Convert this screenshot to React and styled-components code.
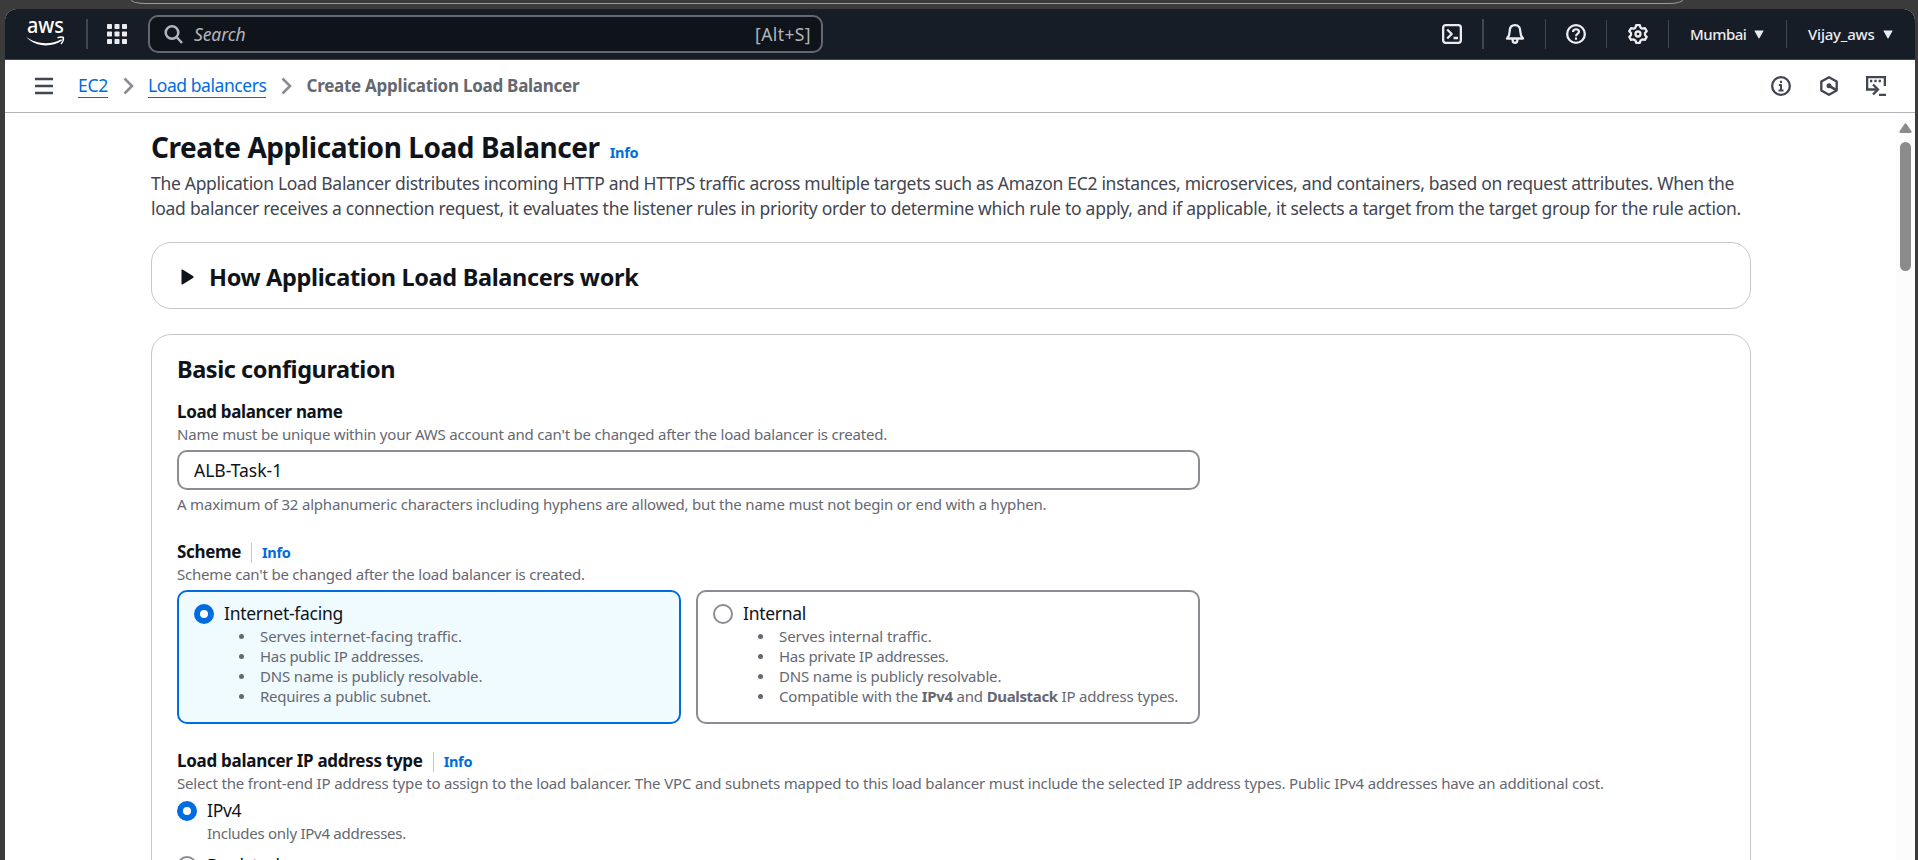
import React from "react";
import styled, { createGlobalStyle, css } from "styled-components";

const GlobalStyle = createGlobalStyle`
  * { box-sizing: border-box; }
  html, body { margin: 0; padding: 0; height: 100%; overflow: hidden; }
  body {
    font-family: "Noto Sans", "Open Sans", sans-serif;
    font-size: 17.5px;
    line-height: 25px;
    color: #0f141a;
    background: #3b3b3b;
  }
`;

const BrowserFrame = styled.div`
  width: 1918px;
  height: 860px;
  display: flex;
  flex-direction: column;
  padding: 0 3px 0 5px;
  overflow: hidden;
  background: #3b3b3b;
`;

const AddressBarEdge = styled.div`
  flex: none;
  height: 4px;
  width: 1552px;
  margin: 0 0 5px 126px;
  border: 1px solid #9c9c9c;
  border-top: 0;
  border-radius: 0 0 14px 14px / 0 0 4px 4px;
  background: #3b3b3b;
`;

const Window = styled.div`
  flex: 1;
  min-height: 0;
  display: flex;
  flex-direction: column;
  border-radius: 12px 12px 0 0;
  overflow: hidden;
  background: #fff;
`;

const Header = styled.header`
  flex: none;
  height: 51px;
  display: flex;
  align-items: center;
  background: #161d26;
  border-bottom: 1px solid #424650;
`;

const LogoCell = styled.div`
  width: 81px;
  height: 50px;
  display: flex;
  align-items: center;
  padding-left: 20px;
`;

const Divider = styled.span`
  flex: none;
  width: ${(p) => (p.$thick ? 2 : 1)}px;
  height: ${(p) => (p.$short ? 28 : 30)}px;
  background: #424650;
`;

const HeaderCell = styled.div`
  width: ${(p) => p.$width}px;
  height: 50px;
  display: flex;
  align-items: center;
  justify-content: center;
  color: #ebebf0;
`;

const AppsCell = styled(HeaderCell)`
  padding-right: 2px;
`;

const HeaderMenu = styled(HeaderCell)`
  justify-content: flex-start;
  gap: 8px;
  padding: 1px 0 0 21px;
  font-size: 15px;
  font-weight: 500;
  letter-spacing: ${(p) => p.$track}px;
`;

const SearchBox = styled.div`
  width: 675px;
  height: 38px;
  display: flex;
  align-items: center;
  padding: 0 10px 0 14px;
  border: 2px solid #656871;
  border-radius: 10px;
  background: #0f141a;
  color: #b4b4bb;
`;

const SearchHint = styled.span`
  flex: 1;
  padding-left: 10px;
  font-style: italic;
  letter-spacing: -0.1px;
`;

const Shortcut = styled.span`
  letter-spacing: 0.4px;
`;

const Spacer = styled.div`
  flex: 1;
`;

const CrumbBar = styled.nav`
  flex: none;
  height: 53px;
  display: flex;
  align-items: center;
  padding: 0 29px 0 30px;
  border-bottom: 1px solid #b4b4bb;
  color: #424650;
`;

const Crumbs = styled.div`
  flex: 1;
  display: flex;
  align-items: center;
  padding-left: 25px;
`;

const CrumbLink = styled.a`
  line-height: 21px;
  padding-bottom: 1px;
  color: #006ce0;
  border-bottom: 1px solid #006ce0;
  letter-spacing: ${(p) => p.$track}px;
`;

const CrumbCurrent = styled.span`
  padding-bottom: 1px;
  font-size: 17px;
  font-weight: 700;
  color: #656871;
  letter-spacing: -0.26px;
`;

const CrumbChevron = styled.svg`
  margin: 0 14.5px;
`;

const Tools = styled.div`
  display: flex;
  align-items: center;
  gap: 28px 27.5px;
`;

const Body = styled.div`
  flex: 1;
  min-height: 0;
  display: flex;
`;

const Main = styled.main`
  flex: 1;
  padding: 15px 145px 0 146px;
  overflow: hidden;
`;

const Scrollbar = styled.div`
  width: 19px;
  display: flex;
  flex-direction: column;
  align-items: center;
  padding: 10px 1px 0 0;
  gap: 9px;
  background: #fcfcfc;
`;

const Thumb = styled.div`
  width: 11px;
  height: 129px;
  border-radius: 6px;
  background: #8b8b8b;
`;

const TitleRow = styled.div`
  display: flex;
  align-items: baseline;
  gap: 10px;
`;

const Title = styled.h1`
  margin: 0;
  font-size: 28px;
  line-height: 38px;
  font-weight: 700;
  letter-spacing: -0.45px;
`;

const InfoLink = styled.a`
  font-size: 14.5px;
  line-height: 20px;
  font-weight: 700;
  letter-spacing: -0.3px;
  color: #006ce0;
`;

const Intro = styled.p`
  margin: 5px 0 21px;
  color: #424650;
  white-space: nowrap;
`;

const IntroLine = styled.span`
  display: block;
  letter-spacing: ${(p) => p.$track}px;
`;

const Panel = styled.section`
  border: 1px solid #c6c6cd;
  border-radius: 20px;
  background: #fff;
`;

const ExpandablePanel = styled(Panel)`
  height: 67px;
  margin-bottom: 25px;
  display: flex;
  align-items: center;
  gap: 15px;
  padding: 3px 29px 0;
`;

const ConfigPanel = styled(Panel)`
  height: 640px;
  padding: 19px 25px;
`;

const SectionTitle = styled.h2`
  margin: 0;
  font-size: 23.5px;
  line-height: 30px;
  font-weight: 700;
  letter-spacing: ${(p) => p.$track}px;
`;

const Field = styled.div`
  margin-top: ${(p) => p.$top}px;
`;

const LabelRow = styled.div`
  display: flex;
  align-items: center;
`;

const Label = styled.label`
  font-size: 17px;
  font-weight: 700;
  letter-spacing: ${(p) => p.$track}px;
`;

const LabelDivider = styled.span`
  width: 1px;
  height: 20px;
  margin: 3px 10px 0;
  background: #c6c6cd;
`;

const Hint = styled.div`
  font-size: 15px;
  line-height: 20px;
  color: #656871;
  white-space: nowrap;
  letter-spacing: ${(p) => p.$track ?? -0.2}px;
`;

const TextInput = styled.input`
  display: block;
  width: 1023px;
  height: 40px;
  margin: 6px 0 4px;
  padding: 0 15px 1px;
  border: 2px solid #8c8c94;
  border-radius: 10px;
  font: inherit;
  color: inherit;
  background: #fff;
  outline: none;
`;

const Tiles = styled.div`
  display: grid;
  grid-template-columns: 504px 504px;
  gap: 15px;
  margin-top: 6px;
`;

const Tile = styled.div`
  height: 134px;
  padding: 9px 15px;
  border: 2px solid ${(p) => (p.$selected ? "#006ce0" : "#8c8c94")};
  border-radius: 10px;
  background: ${(p) => (p.$selected ? "#f0fbff" : "#fff")};
`;

const RadioRow = styled.div`
  display: flex;
  align-items: center;
  gap: 10px;
  letter-spacing: ${(p) => p.$track}px;
`;

const Radio = styled.span`
  flex: none;
  width: 20px;
  height: 20px;
  margin-top: 1px;
  border-radius: 50%;
  background: #fff;
  ${(p) =>
    p.$selected
      ? css`border: 6px solid #006ce0;`
      : css`border: 2px solid #8c8c94;`}
`;

const OptionList = styled.ul`
  list-style: none;
  margin: 0;
  padding: 0 0 0 45px;
  font-size: 15px;
  line-height: 20px;
  letter-spacing: -0.17px;
  color: #656871;
`;

const OptionItem = styled.li`
  display: flex;
  align-items: center;
  gap: 16px;
  white-space: pre;
  letter-spacing: ${(p) => p.$track ?? -0.17}px;

  &::before {
    content: "";
    width: 5px;
    height: 5px;
    border-radius: 50%;
    background: #656871;
  }

  b { font-weight: 700; letter-spacing: -0.35px; }
`;

const RadioOption = styled.div`
  margin-bottom: 10px;

  ${Hint} { padding-left: 30px; }
`;

const AwsLogo = () => (
  <svg width="42" height="30" viewBox="0 0 42 30" fill="#fff" overflow="visible">
    <text x="2" y="14" fontSize="22" fontWeight="500" textLength="37" lengthAdjust="spacingAndGlyphs">aws</text>
    <path d="M1 17.800C11 25.500 26 26.300 36.300 20.200L37 21.500C26 29 10 28 1 17.800Z" />
    <path d="M32.500 18.700C35 17.800 37.300 17.900 38.300 18.500C38.700 20.300 37.800 23 36 25" fill="none" stroke="#fff" strokeWidth="1.500" />
  </svg>
);

const AppsIcon = () => (
  <svg width="20" height="20" viewBox="0 0 20 20" fill="#ebebf0">
    {[0, 7.5, 15].map((y) =>
      [0, 7.5, 15].map((x) => <rect key={`${x}-${y}`} x={x} y={y} width="5" height="5" rx="0.8" />)
    )}
  </svg>
);

const Icon = ({ size = 20, stroke = 2.3, children }) => (
  <svg width={size} height={size} viewBox={`0 0 ${size} ${size}`} fill="none" stroke="currentColor" strokeWidth={stroke} strokeLinejoin="round">
    {children}
  </svg>
);

const SearchIcon = () => (
  <Icon stroke={2.5}>
    <circle cx="8" cy="8.500" r="6.300" />
    <path d="M12.500 13l5.500 6" />
  </Icon>
);

const TerminalIcon = () => (
  <Icon>
    <rect x="1.150" y="1.150" width="17.700" height="17.700" rx="2.500" />
    <path d="M5.200 5.500L9.700 10l-4.500 4.500M11.500 14h4.500" />
  </Icon>
);

const BellIcon = () => (
  <Icon>
    <path d="M10 1.200C6.300 1.200 4.700 3.800 4.700 7.200c0 3.500-1 5.300-2.700 7.300h16c-1.700-2-2.700-3.800-2.700-7.300 0-3.400-1.600-6-5.300-6z" />
    <path d="M7.700 15v1.500a2.300 2.300 0 0 0 4.600 0V15" />
  </Icon>
);

const HelpIcon = () => (
  <Icon>
    <circle cx="10" cy="10" r="8.850" />
    <path d="M7 8c0-1.800 1.300-2.800 3-2.800s3 1 3 2.600c0 2-3 2.200-3 4.400M10 13.500v2.200" strokeWidth="2.100" />
  </Icon>
);

const GearIcon = () => (
  <Icon>
    <path d="M8.200 1.200h3.600l.8 2.500 1.700 1 2.600-.6 1.800 3.100L17 9.100v1.900l1.700 1.900-1.800 3-2.600-.5-1.700 1-.8 2.400H8.200l-.8-2.400-1.700-1-2.600.5-1.800-3L3 11V9.100L1.300 7.200l1.800-3.100 2.600.6 1.700-1z" />
    <circle cx="10" cy="10" r="2.500" />
  </Icon>
);

const CaretDown = () => (
  <svg width="10" height="9" viewBox="0 0 10 9" fill="#ebebf0">
    <path d="M.8.500h8.400q.6 0 .3.600L5.400 8.300q-.4.600-.8 0L.5 1.100Q.2.500.8.500z" />
  </svg>
);

const MenuIcon = () => (
  <Icon size={18} stroke={2.3}>
    <path d="M0 2h18M0 9h18M0 16h18" />
  </Icon>
);

const Chevron = () => (
  <CrumbChevron width="11" height="18" viewBox="0 0 11 18" fill="none" stroke="#8c8c94" strokeWidth="2.600">
    <path d="M1.500 1.500L9 9l-7.500 7.500" />
  </CrumbChevron>
);

const InfoIcon = () => (
  <Icon>
    <circle cx="10" cy="10" r="8.850" />
    <path d="M7.800 9H10v5.500M7.500 14.500h5M10 4.800v2.200" strokeWidth="2" />
  </Icon>
);

const HexIcon = () => (
  <Icon>
    <path d="M10 1.200l7.700 4.300v9L10 18.800l-7.700-4.300v-9z" />
    <circle cx="10" cy="9.800" r="2.500" fill="currentColor" stroke="none" />
    <path d="M10 9.800l7 4" strokeWidth="2.700" />
  </Icon>
);

const ShellIcon = () => (
  <Icon>
    <path d="M18.850 10V1.150H1.150V13.500H10.500" strokeLinejoin="miter" />
    <path d="M4 5h2.300M8.300 5h2.300M12.600 5h2.300" />
    <path d="M7 8.500l5 5-5 5M13 19h7" strokeLinejoin="miter" />
  </Icon>
);

const ExpandIcon = () => (
  <svg width="13" height="16" viewBox="0 0 13 16" fill="#0f141a">
    <path d="M.5 1.200Q.5 0 1.500.600l10.500 6.500q1.200.9 0 1.800L1.500 15.400Q.5 16 .5 14.800z" />
  </svg>
);

const ScrollUp = () => (
  <svg width="13" height="10" viewBox="0 0 13 10" fill="#8b8b8b">
    <path d="M5.700.8q.8-.9 1.600 0l5 7.200q.7 1.700-.8 2h-10Q0 9.700.7 8z" />
  </svg>
);

export default function App() {
  return (
    <BrowserFrame>
      <GlobalStyle />
      <AddressBarEdge />
      <Window>
        <Header>
          <LogoCell><AwsLogo /></LogoCell>
          <Divider $thick />
          <AppsCell $width={60}><AppsIcon /></AppsCell>
          <SearchBox>
            <SearchIcon />
            <SearchHint>Search</SearchHint>
            <Shortcut>[Alt+S]</Shortcut>
          </SearchBox>
          <Spacer />
          <HeaderCell $width={60}><TerminalIcon /></HeaderCell>
          <Divider $thick />
          <HeaderCell $width={61}><BellIcon /></HeaderCell>
          <Divider />
          <HeaderCell $width={60}><HelpIcon /></HeaderCell>
          <Divider $short />
          <HeaderCell $width={61}><GearIcon /></HeaderCell>
          <Divider $short />
          <HeaderMenu $width={117} $track={-0.5}>Mumbai<CaretDown /></HeaderMenu>
          <Divider $short />
          <HeaderMenu $width={128} $track={-0.2}>Vijay_aws<CaretDown /></HeaderMenu>
        </Header>

        <CrumbBar>
          <MenuIcon />
          <Crumbs>
            <CrumbLink $track={-0.27}>EC2</CrumbLink>
            <Chevron />
            <CrumbLink $track={-0.43}>Load balancers</CrumbLink>
            <Chevron />
            <CrumbCurrent>Create Application Load Balancer</CrumbCurrent>
          </Crumbs>
          <Tools>
            <InfoIcon />
            <HexIcon />
            <ShellIcon />
          </Tools>
        </CrumbBar>

        <Body>
          <Main>
            <TitleRow>
              <Title>Create Application Load Balancer</Title>
              <InfoLink>Info</InfoLink>
            </TitleRow>
            <Intro>
              <IntroLine $track={-0.3}>
                The Application Load Balancer distributes incoming HTTP and HTTPS traffic across multiple targets such as Amazon EC2 instances, microservices, and containers, based on request attributes. When the
              </IntroLine>
              <IntroLine $track={-0.27}>
                load balancer receives a connection request, it evaluates the listener rules in priority order to determine which rule to apply, and if applicable, it selects a target from the target group for the rule action.
              </IntroLine>
            </Intro>

            <ExpandablePanel>
              <ExpandIcon />
              <SectionTitle $track={-0.34}>How Application Load Balancers work</SectionTitle>
            </ExpandablePanel>

            <ConfigPanel>
              <SectionTitle $track={-0.44}>Basic configuration</SectionTitle>

              <Field $top={15}>
                <LabelRow><Label $track={-0.34}>Load balancer name</Label></LabelRow>
                <Hint>Name must be unique within your AWS account and can't be changed after the load balancer is created.</Hint>
                <TextInput defaultValue="ALB-Task-1" />
                <Hint>A maximum of 32 alphanumeric characters including hyphens are allowed, but the name must not begin or end with a hyphen.</Hint>
              </Field>

              <Field $top={25}>
                <LabelRow>
                  <Label $track={-0.34}>Scheme</Label>
                  <LabelDivider />
                  <InfoLink>Info</InfoLink>
                </LabelRow>
                <Hint>Scheme can't be changed after the load balancer is created.</Hint>
                <Tiles>
                  <Tile $selected>
                    <RadioRow $track={-0.28}><Radio $selected />Internet-facing</RadioRow>
                    <OptionList>
                      <OptionItem $track={-0.05}>Serves internet-facing traffic.</OptionItem>
                      <OptionItem $track={-0.3}>Has public IP addresses.</OptionItem>
                      <OptionItem>DNS name is publicly resolvable.</OptionItem>
                      <OptionItem $track={-0.25}>Requires a public subnet.</OptionItem>
                    </OptionList>
                  </Tile>
                  <Tile>
                    <RadioRow $track={-0.28}><Radio />Internal</RadioRow>
                    <OptionList>
                      <OptionItem $track={-0.05}>Serves internal traffic.</OptionItem>
                      <OptionItem $track={-0.3}>Has private IP addresses.</OptionItem>
                      <OptionItem>DNS name is publicly resolvable.</OptionItem>
                      <OptionItem><span>Compatible with the <b>IPv4</b> and <b>Dualstack</b> IP address types.</span></OptionItem>
                    </OptionList>
                  </Tile>
                </Tiles>
              </Field>

              <Field $top={24}>
                <LabelRow>
                  <Label $track={-0.28}>Load balancer IP address type</Label>
                  <LabelDivider />
                  <InfoLink>Info</InfoLink>
                </LabelRow>
                <Hint $track={-0.165}>
                  Select the front-end IP address type to assign to the load balancer. The VPC and subnets mapped to this load balancer must include the selected IP address types. Public IPv4 addresses have an additional cost.
                </Hint>
                <Field $top={5}>
                  <RadioOption>
                    <RadioRow $track={-0.28}><Radio $selected />IPv4</RadioRow>
                    <Hint $track={-0.27}>Includes only IPv4 addresses.</Hint>
                  </RadioOption>
                  <RadioOption>
                    <RadioRow $track={-0.28}><Radio />Dualstack</RadioRow>
                  </RadioOption>
                </Field>
              </Field>
            </ConfigPanel>
          </Main>
          <Scrollbar>
            <ScrollUp />
            <Thumb />
          </Scrollbar>
        </Body>
      </Window>
    </BrowserFrame>
  );
}
